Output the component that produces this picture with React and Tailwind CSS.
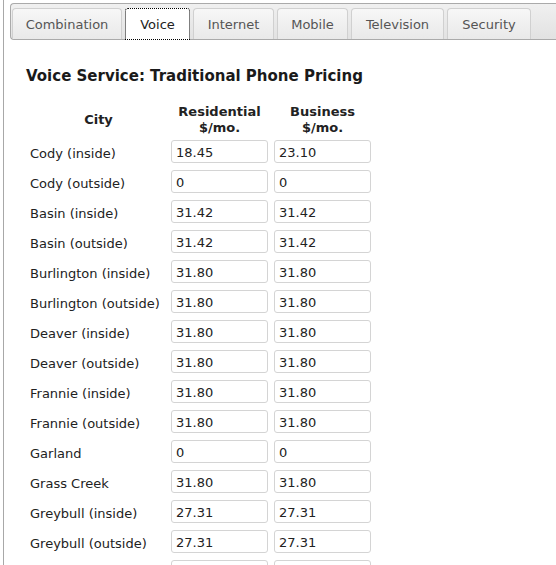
import React from "react";

const tabs = [
    ["Combination", "w-[110px]"],
    ["Voice", "w-[65px]"],
    ["Internet", "w-[81px]"],
    ["Mobile", "w-[71px]"],
    ["Television", "w-[93px]"],
    ["Security", "w-[84px]"],
];

const rows = [
    ["Cody (inside)", "18.45", "23.10"],
    ["Cody (outside)", "0", "0"],
    ["Basin (inside)", "31.42", "31.42"],
    ["Basin (outside)", "31.42", "31.42"],
    ["Burlington (inside)", "31.80", "31.80"],
    ["Burlington (outside)", "31.80", "31.80"],
    ["Deaver (inside)", "31.80", "31.80"],
    ["Deaver (outside)", "31.80", "31.80"],
    ["Frannie (inside)", "31.80", "31.80"],
    ["Frannie (outside)", "31.80", "31.80"],
    ["Garland", "0", "0"],
    ["Grass Creek", "31.80", "31.80"],
    ["Greybull (inside)", "27.31", "27.31"],
    ["Greybull (outside)", "27.31", "27.31"],
    ["Hyattville", "31.80", "31.80"],
];

const PriceInput = ({ value }) => (
    <input
        readOnly
        value={value}
        className="w-[97px] h-[23px] border border-[#d4d4d4] rounded-[3px] bg-white px-[4px] pt-[2px] text-[13px] text-[#222] outline-none"
    />
);

export default function App() {
    return (
        <div
            className="w-[556px] h-[565px] overflow-hidden bg-white text-[#222]"
            style={{ fontFamily: "Verdana, 'DejaVu Sans', sans-serif" }}
        >
            <div className="ml-[3px] h-full border-l border-[#a8a8a8] pt-[3px]">
                <div className="ml-[6px] h-[37px] border border-[#aaa] border-r-0 rounded-l-[4px] bg-gradient-to-b from-[#f0f0f0] to-[#e2e2e2] flex items-end gap-[3px] pl-[1px]">
                    {tabs.map(([t, w]) => (
                        <div
                            key={t}
                            className={
                                (t === "Voice"
                                    ? "h-[32px] pt-[2px] flex items-center justify-center bg-white border border-dotted border-black rounded-t-[3px] text-[13px] text-[#222] mb-[-1px] "
                                    : "h-[31px] pt-[2px] flex items-center justify-center bg-gradient-to-b from-[#f7f7f7] to-[#e9e9e9] border border-b-0 border-[#d0d0d0] rounded-t-[4px] text-[13px] text-[#555] ") + w
                            }
                        >
                            {t}
                        </div>
                    ))}
                </div>

                <div className="pl-[22px] pt-[27px]">
                    <h2 className="text-[15px] font-bold leading-[18px] text-[#1a1a1a]">
                        Voice Service: Traditional Phone Pricing
                    </h2>

                    <div className="mt-[15px] grid grid-cols-[145px_103px_97px] text-[13px]">
                        <div className="h-[36px] pt-[4px] flex items-center justify-center font-bold">City</div>
                        <div className="h-[36px] pt-[4px] w-[97px] flex flex-col items-center justify-center font-bold leading-[16px]">
                            <span>Residential</span>
                            <span>$/mo.</span>
                        </div>
                        <div className="h-[36px] pt-[4px] flex flex-col items-center justify-center font-bold leading-[16px]">
                            <span>Business</span>
                            <span>$/mo.</span>
                        </div>

                        {rows.map(([city, res, bus]) => (
                            <React.Fragment key={city}>
                                <div className="h-[30px] pt-[5px] flex items-center pl-[4px]">{city}</div>
                                <div className="h-[30px] flex items-center">
                                    <PriceInput value={res} />
                                </div>
                                <div className="h-[30px] flex items-center">
                                    <PriceInput value={bus} />
                                </div>
                            </React.Fragment>
                        ))}
                    </div>
                </div>
            </div>
        </div>
    );
}
